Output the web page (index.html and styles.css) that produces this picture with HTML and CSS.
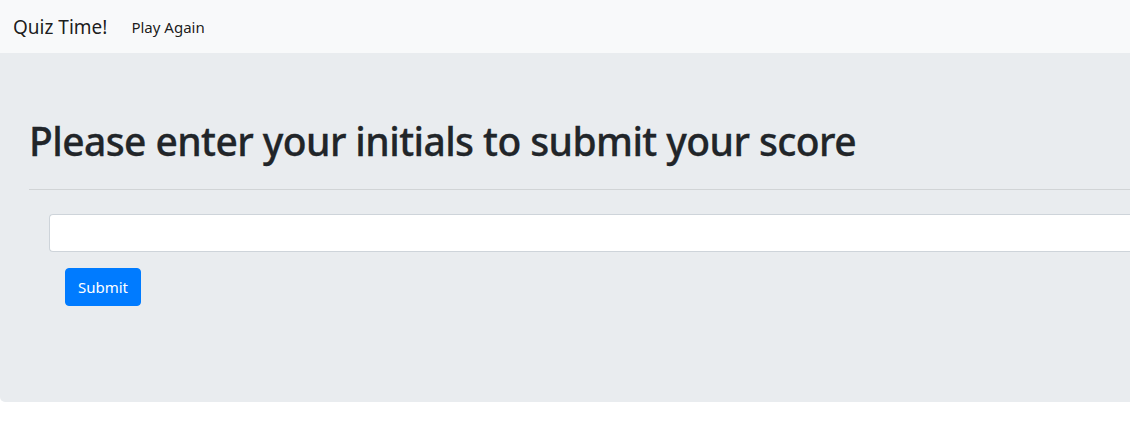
FILE: index.html
```html
<!DOCTYPE html>
<html lang="en">
<head>
<meta charset="utf-8">
<title>Quiz Time!</title>
<link rel="stylesheet" href="styles.css">
</head>
<body>
<nav class="navbar">
  <a class="brand" href="#">Quiz Time!</a>
  <a class="nav-link" href="#">Play Again</a>
</nav>
<main class="jumbotron">
  <h1 class="title">Please enter your initials to submit your score</h1>
  <hr class="divider">
  <form class="score-form">
    <input class="initials" type="text" aria-label="Initials">
    <button class="btn-submit" type="button">Submit</button>
  </form>
</main>
</body>
</html>
```
FILE: styles.css
```css
* { box-sizing: border-box; }
html, body { margin: 0; padding: 0; }
body {
  font-family: "Noto Sans", "Open Sans", sans-serif;
  color: #212529;
  background: #fff;
}
.navbar {
  height: 53px;
  background: #f8f9fa;
  display: flex;
  align-items: center;
  padding: 0 13px;
}
.brand {
  font-size: 19px;
  color: rgba(0,0,0,.9);
  text-decoration: none;
  margin-right: 24px;
}
.nav-link {
  font-size: 15px;
  color: rgba(0,0,0,.9);
  text-decoration: none;
}
.jumbotron {
  background: #e9ecef;
  height: 349px;
  padding: 64px 0 0 29px;
  border-bottom-left-radius: 5px;
}
.title {
  margin: 0;
  font-size: 39px;
  font-weight: 500;
  letter-spacing: -0.58px;
  line-height: 48px;
  color: #212529;
  -webkit-text-stroke: 0.3px #212529;
}
.divider {
  margin: 24px 0 16px;
  border: 0;
  border-top: 1px solid rgba(0,0,0,.1);
}
.score-form {
  padding-left: 20px;
  padding-top: 8px;
  display: flex;
  flex-direction: column;
  align-items: stretch;
}
.initials {
  height: 38px;
  border: 1px solid #ced4da;
  border-right: 0;
  border-radius: 4px 0 0 4px;
  background: #fff;
  font-size: 16px;
  padding: 6px 12px;
}
.btn-submit {
  align-self: flex-start;
  margin: 16px 0 0 16px;
  height: 38px;
  width: 76px;
  background: #007bff;
  color: #fff;
  border: 1px solid #007bff;
  border-radius: 4px;
  font-family: inherit;
  font-size: 15px;
  padding: 0;
}
```
